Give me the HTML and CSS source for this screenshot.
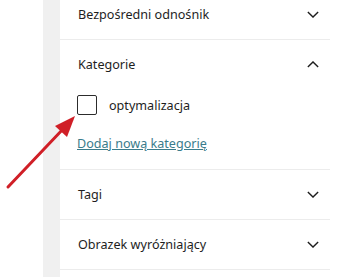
FILE: index.html
```html
<!DOCTYPE html>
<html lang="pl">
  <head>
    <meta charset="UTF-8" />
    <meta name="viewport" content="width=device-width, initial-scale=1.0" />
    <title>Ustawienia wpisu</title>
    <link rel="stylesheet" href="styles.css">
  </head>
  <body>
    <div class="screen">
      <div class="gutter"></div>
      <div class="rail"></div>
      <div class="sidebar">
        <div class="panel">
          <div class="panel-header">
            <span>Bezpośredni odnośnik</span>
            <svg class="chevron" viewBox="0 0 14 8"><path d="M1 1l6 6 6-6" /></svg>
          </div>
        </div>

        <div class="panel">
          <div class="panel-header">
            <span>Kategorie</span>
            <svg class="chevron" viewBox="0 0 14 8"><path d="M1 7l6-6 6 6" /></svg>
          </div>
          <div class="panel-body">
            <label class="check-row">
              <span class="checkbox"></span>
              <span>optymalizacja</span>
            </label>
            <a class="add-link" href="#">Dodaj nową kategorię</a>
          </div>
        </div>

        <div class="panel">
          <div class="panel-header">
            <span>Tagi</span>
            <svg class="chevron" viewBox="0 0 14 8"><path d="M1 1l6 6 6-6" /></svg>
          </div>
        </div>

        <div class="panel">
          <div class="panel-header">
            <span>Obrazek wyróżniający</span>
            <svg class="chevron" viewBox="0 0 14 8"><path d="M1 1l6 6 6-6" /></svg>
          </div>
        </div>
      </div>

      <!-- annotation arrow drawn over the screenshot -->
      <svg class="arrow" viewBox="0 0 345 277">
        <line x1="8" y1="187" x2="64" y2="128" />
        <polygon points="75,116 55,126 67,137" />
      </svg>
    </div>
  </body>
</html>
```

FILE: styles.css
```css
:root {
  --text-primary: #1e1e1e;
  --border-color: #ececec;
  --rail-color: #f0f0f0;
  --link-color: #3a7c8b;
  --arrow-color: #d01f27;
}

* {
  box-sizing: border-box;
  margin: 0;
  padding: 0;
}

body {
  font-family: "Noto Sans", "Open Sans", sans-serif;
  font-size: 12.6px;
  color: var(--text-primary);
  background-color: white;
  overflow: hidden;
}

.screen {
  position: relative;
  display: flex;
  height: 277px;
}

.gutter {
  width: 43px;
}

.rail {
  width: 17px;
  background-color: var(--rail-color);
}

.sidebar {
  width: 270px;
  margin-top: -10px;
}

.panel {
  border-bottom: 1px solid var(--border-color);
}

.panel-header {
  height: 49px;
  display: flex;
  align-items: center;
  justify-content: space-between;
  padding: 0 11px 0 18px;
}

.chevron {
  width: 12px;
  height: 7px;
  fill: none;
  stroke: var(--text-primary);
  stroke-width: 1.6;
}

.panel-body {
  padding: 6px 18px 15px 17px;
}

.check-row {
  display: flex;
  align-items: center;
  gap: 12px;
  height: 20px;
}

.checkbox {
  width: 20px;
  height: 20px;
  border: 1px solid #2c2c2c;
  border-radius: 2px;
}

.add-link {
  display: block;
  margin-top: 19px;
  line-height: 20px;
  color: var(--link-color);
}

.arrow {
  position: absolute;
  left: 0;
  top: 0;
  width: 345px;
  height: 277px;
  pointer-events: none;
}

.arrow line {
  stroke: var(--arrow-color);
  stroke-width: 3;
  stroke-linecap: round;
}

.arrow polygon {
  fill: var(--arrow-color);
}
```
